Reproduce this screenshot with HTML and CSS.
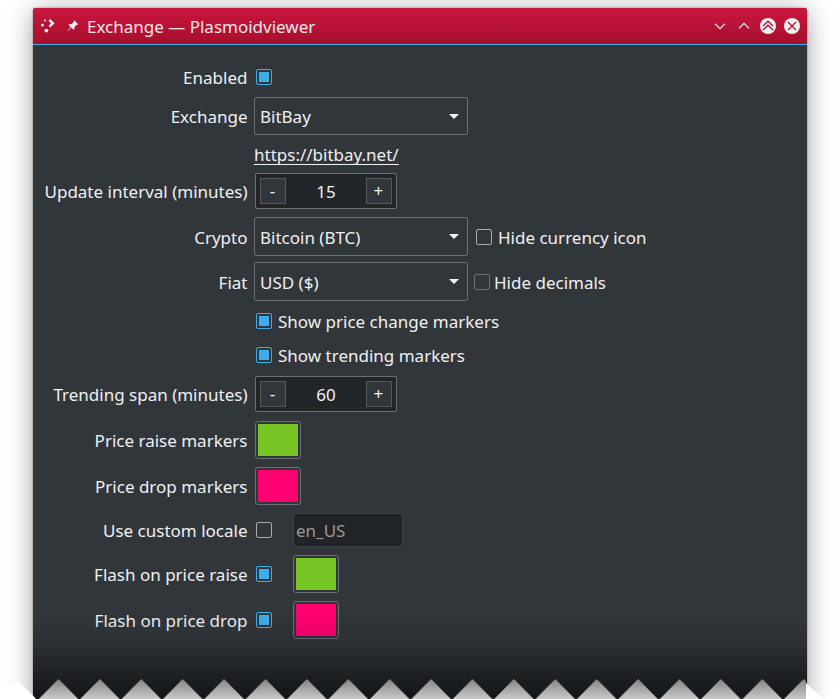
FILE: index.html
```html
<!DOCTYPE html>
<html lang="en">
<head>
<meta charset="utf-8">
<title>Exchange — Plasmoidviewer</title>
<link rel="stylesheet" href="styles.css">
</head>
<body>
<main class="window">
  <header class="titlebar">
    <svg class="app-icon" width="16" height="16" viewBox="0 0 16 16" fill="#f5eef0"><path d="M8.4 2.8 10.2 1 14.6 5.3 10.2 9.6 8.6 8 11 5.3Z"/><circle cx="5" cy="2.4" r="1"/><circle cx="2.5" cy="7.2" r="1.4"/><circle cx="6.4" cy="12.6" r="1.9"/></svg>
    <svg class="pin-icon" width="12" height="12" viewBox="0 0 12 12" fill="#f5eef0"><path d="M7.2.3 11.2 4.2 10.5 5 9.8 4.7 7.4 7 7.5 8.8 6.6 9.7 4.4 7.6.8 11.1.4 10.7 3.7 6.9 1.5 4.8 2.4 3.9 4.6 4 6.9 1.9 6.5 1Z"/></svg>
    <h1>Exchange — Plasmoidviewer</h1>
    <div class="controls">
      <svg width="16" height="16" viewBox="0 0 16 16"><path class="line" d="M3 5.8 8 10.6 13 5.8"/></svg>
      <svg width="16" height="16" viewBox="0 0 16 16"><path class="line" d="M3 10.2 8 5.4 13 10.2"/></svg>
      <svg width="16" height="16" viewBox="0 0 16 16"><circle class="disc" cx="8" cy="8" r="8"/><path class="cut" d="M3 8 8 3.2 13 8M3 12 8 7.2 13 12"/></svg>
      <svg width="16" height="16" viewBox="0 0 16 16"><circle class="disc" cx="8" cy="8" r="8"/><path class="cut" d="M4 4 12 12M12 4 4 12"/></svg>
    </div>
  </header>
  <form class="settings">
    <div class="row enabled"><label>Enabled</label><i class="check on"></i></div>
    <div class="row exchange"><label>Exchange</label><div class="combo">BitBay</div></div>
    <div class="row link"><label></label><a>https://bitbay.net/</a></div>
    <div class="row interval"><label>Update interval (minutes)</label><div class="spin"><b>-</b><span>15</span><b>+</b></div></div>
    <div class="row crypto"><label>Crypto</label><div class="combo">Bitcoin (BTC)</div><i class="check"></i><span class="text">Hide currency icon</span></div>
    <div class="row fiat"><label>Fiat</label><div class="combo">USD ($)</div><i class="check dim"></i><span class="text">Hide decimals</span></div>
    <div class="row change"><label></label><i class="check on"></i><span class="text">Show price change markers</span></div>
    <div class="row trending"><label></label><i class="check on"></i><span class="text">Show trending markers</span></div>
    <div class="row span"><label>Trending span (minutes)</label><div class="spin"><b>-</b><span>60</span><b>+</b></div></div>
    <div class="row raise"><label>Price raise markers</label><div class="swatch green"></div></div>
    <div class="row drop"><label>Price drop markers</label><div class="swatch pink"></div></div>
    <div class="row locale"><label>Use custom locale</label><i class="check"></i><div class="field">en_US</div></div>
    <div class="row flash"><label>Flash on price raise</label><i class="check on"></i><div class="swatch green"></div></div>
    <div class="row flash"><label>Flash on price drop</label><i class="check on"></i><div class="swatch pink"></div></div>
  </form>
</main>
<svg class="torn" width="840" height="99" viewBox="0 0 840 99">
  <defs>
    <linearGradient id="shade" x1="0" y1="0" x2="0" y2="1"><stop offset="0" stop-color="#000" stop-opacity="0"/><stop offset=".35" stop-color="#000" stop-opacity=".12"/><stop offset="1" stop-color="#000" stop-opacity=".62"/></linearGradient>
    <linearGradient id="paper" x1="0" y1="0" x2="0" y2="1"><stop offset="0" stop-color="#858585"/><stop offset="1" stop-color="#c8c8c8"/></linearGradient>
    <pattern id="teeth" x="37.8" y="79" width="41.4" height="20" patternUnits="userSpaceOnUse"><path d="M1 20 20.7 0 40.4 20Z" fill="url(#paper)"/></pattern>
  </defs>
  <rect x="33" y="15" width="774" height="84" fill="url(#shade)"/>
  <rect x="37.8" y="79" width="768.2" height="20" fill="url(#teeth)"/>
  <path d="M0 99V96L17.5 81 33 95.5 36 99Z" fill="#fff"/>
  <path d="M806 99V83L823.5 99ZM823.5 99 840 83V99Z" fill="#fff"/>
</svg>
</body>
</html>
```
FILE: styles.css
```css
* { box-sizing: border-box; }
body {
  margin: 0;
  height: 699px;
  padding: 8px 33px 0;
  overflow: hidden;
  position: relative;
  background: #fff;
  color: #eff0f1;
  font: 17px/24px "Noto Sans", sans-serif;
}
.window {
  height: 720px;
  background: #31363b;
  border-radius: 3px 3px 0 0;
  box-shadow: 0 3px 26px rgba(0, 0, 0, .38), 0 0 2px rgba(0, 0, 0, .45);
}
.titlebar {
  display: flex;
  align-items: center;
  height: 37px;
  padding: 0 7px 0 7px;
  background: linear-gradient(#c9163d, #a60f2e);
  border-bottom: 1px solid #3daee9;
  border-radius: 3px 3px 0 0;
}
.titlebar h1 { margin: 2px 0 0 8px; font-size: 17px; font-weight: 400; color: #f5e6ea; }
.app-icon { margin-right: 11px; }
.controls { display: flex; gap: 8px; margin-left: auto; }
.line { fill: none; stroke: #f5eef0; stroke-width: 1.2; }
.disc { fill: #eff0f1; }
.cut { fill: none; stroke: #b01334; stroke-width: 1.3; }

.settings { padding-top: 24px; }
.row { display: flex; align-items: center; height: 38px; margin-top: 8px; white-space: nowrap; }
.row label { width: 214.5px; margin-right: 6.5px; text-align: right; position: relative; top: 1px; }
.text { position: relative; top: 1px; margin-left: 6px; }
.enabled { height: 16px; margin-top: 0; }
.exchange { margin-top: 12px; }
.link { height: 20px; margin-top: 10px; }
.interval { height: 36px; }
.crypto { height: 39px; }
.fiat { height: 39px; margin-top: 6px; }
.change { height: 16px; margin-top: 12px; }
.trending { height: 16px; margin-top: 18px; }
.span { height: 36px; margin-top: 13px; }
.raise { margin-top: 9px; }
.locale { height: 34px; }

.check {
  width: 16px;
  height: 16px;
  margin-left: 2px;
  border: 1px solid #a9acae;
  border-radius: 2px;
}
.combo + .check { margin-left: 8px; }
.check.dim { border-color: #6b6f73; }
.combo + .check.dim { margin-left: 6px; }
.check.dim + .text { margin-left: 4px; }
.check.on { border-color: #3daee9; padding: 2px; background: #3daee9 content-box; }

.combo {
  display: flex;
  align-items: center;
  justify-content: space-between;
  width: 214px;
  height: 100%;
  padding: 2px 8px 0 5px;
  border: 1px solid #6b6f73;
  border-radius: 2px;
}
.combo::after {
  content: "";
  margin-top: -2px;
  border: 5px solid transparent;
  border-top-color: #eff0f1;
  border-bottom: 0;
}
.row a { border-bottom: 1px solid #eff0f1; line-height: 18px; }

.spin {
  display: flex;
  align-items: center;
  justify-content: space-between;
  width: 142px;
  height: 36px;
  margin-left: 1px;
  padding: 0 4px;
  background: #232629;
  border: 1px solid #6b6f73;
  border-radius: 2px;
}
.spin b {
  width: 26px;
  height: 26px;
  background: #31363b;
  border: 1px solid #54585c;
  padding-right: 1px;
  text-align: center;
  font-weight: 400;
}
.spin span { padding-top: 2px; }

.swatch {
  width: 46px;
  height: 38px;
  margin-left: 1px;
  padding: 2px;
  border: 1px solid #6b6f73;
  border-radius: 3px;
  background-clip: content-box;
}
.check + .swatch { margin-left: 21px; }
.green { background-color: #78c625; }
.pink { background-color: #ff0070; }
.field {
  width: 110px;
  height: 34px;
  margin-left: 21px;
  padding: 5px 2px;
  background: #212427;
  border: 1px solid #3d4145;
  border-radius: 2px;
  color: #9a9895;
}
.torn { position: absolute; left: 0; bottom: 0; }
```
